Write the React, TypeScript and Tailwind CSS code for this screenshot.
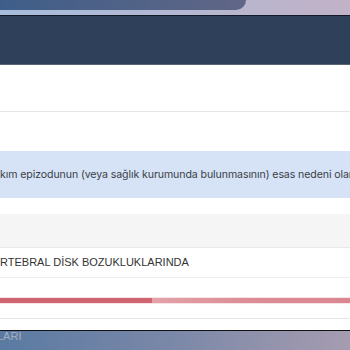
export default function App() {
  return (
    <div className="w-[350px] h-[350px] overflow-hidden bg-white flex flex-col" style={{ fontFamily: '"Liberation Sans", Arial, sans-serif' }}>
      {/* top strip */}
      <div className="h-[15px] shrink-0 bg-gradient-to-r from-[#a7bddc] via-[#b3b8d2] to-[#c1b2c7] flex flex-col">
        <div className="w-[246px] h-[10px] rounded-br-[10px] bg-gradient-to-r from-[#3e5e89] to-[#606686]" />
      </div>
      <div className="h-[1px] shrink-0 bg-[#111827]" />
      {/* navy header */}
      <div className="h-[48px] shrink-0 bg-[#2f405a]" />
      <div className="h-[1px] shrink-0 bg-[#5b6475]" />
      <div className="h-[46px] shrink-0 bg-white" />
      <div className="h-[1px] shrink-0 bg-[#e6e6e6]" />
      <div className="h-[39px] shrink-0 bg-white" />
      {/* blue info band */}
      <div className="h-[47px] shrink-0 bg-[#d6e3f6] flex items-center overflow-hidden">
        <span className="whitespace-nowrap text-[10.6px] tracking-[-0.1px] text-[#3a3f47]" style={{ fontFamily: 'Inter, "Noto Sans", sans-serif' }}>
          kım epizodunun (veya sağlık kurumunda bulunmasının) esas nedeni olarak
        </span>
      </div>
      <div className="h-[16px] shrink-0 bg-white" />
      <div className="h-[33px] shrink-0 bg-[#f5f5f5]" />
      <div className="h-[1px] shrink-0 bg-[#e9e9e9]" />
      <div className="h-[29px] shrink-0 bg-white flex items-center overflow-hidden">
        <span className="whitespace-nowrap text-[11px] text-[#333333]">RTEBRAL DİSK BOZUKLUKLARINDA</span>
      </div>
      <div className="h-[1px] shrink-0 bg-[#eeeeee]" />
      <div className="h-[19px] shrink-0 bg-white" />
      {/* progress bar */}
      <div className="h-[7px] shrink-0 bg-[#f8e4e6] flex items-center">
        <div className="h-[5px] w-full flex">
          <div className="w-[152px] h-full bg-[#cf6571]" />
          <div className="flex-1 h-full bg-gradient-to-r from-[#e3a2a9] via-[#dc8c95] to-[#da8790]" />
        </div>
      </div>
      <div className="h-[14px] shrink-0 bg-white" />
      <div className="h-[1px] shrink-0 bg-[#e6e6e6]" />
      <div className="h-[11px] shrink-0 bg-white" />
      <div className="h-[1px] shrink-0 bg-[#111111]" />
      {/* bottom gradient */}
      <div className="flex-1 bg-gradient-to-r from-[#5a7aa2] via-[#7b88a8] to-[#a69cb0] overflow-hidden">
        <span className="block text-[11px] leading-[12px] text-[#a3aec0] -mt-[1px] -ml-[3px]">LARI</span>
      </div>
    </div>
  );
}
